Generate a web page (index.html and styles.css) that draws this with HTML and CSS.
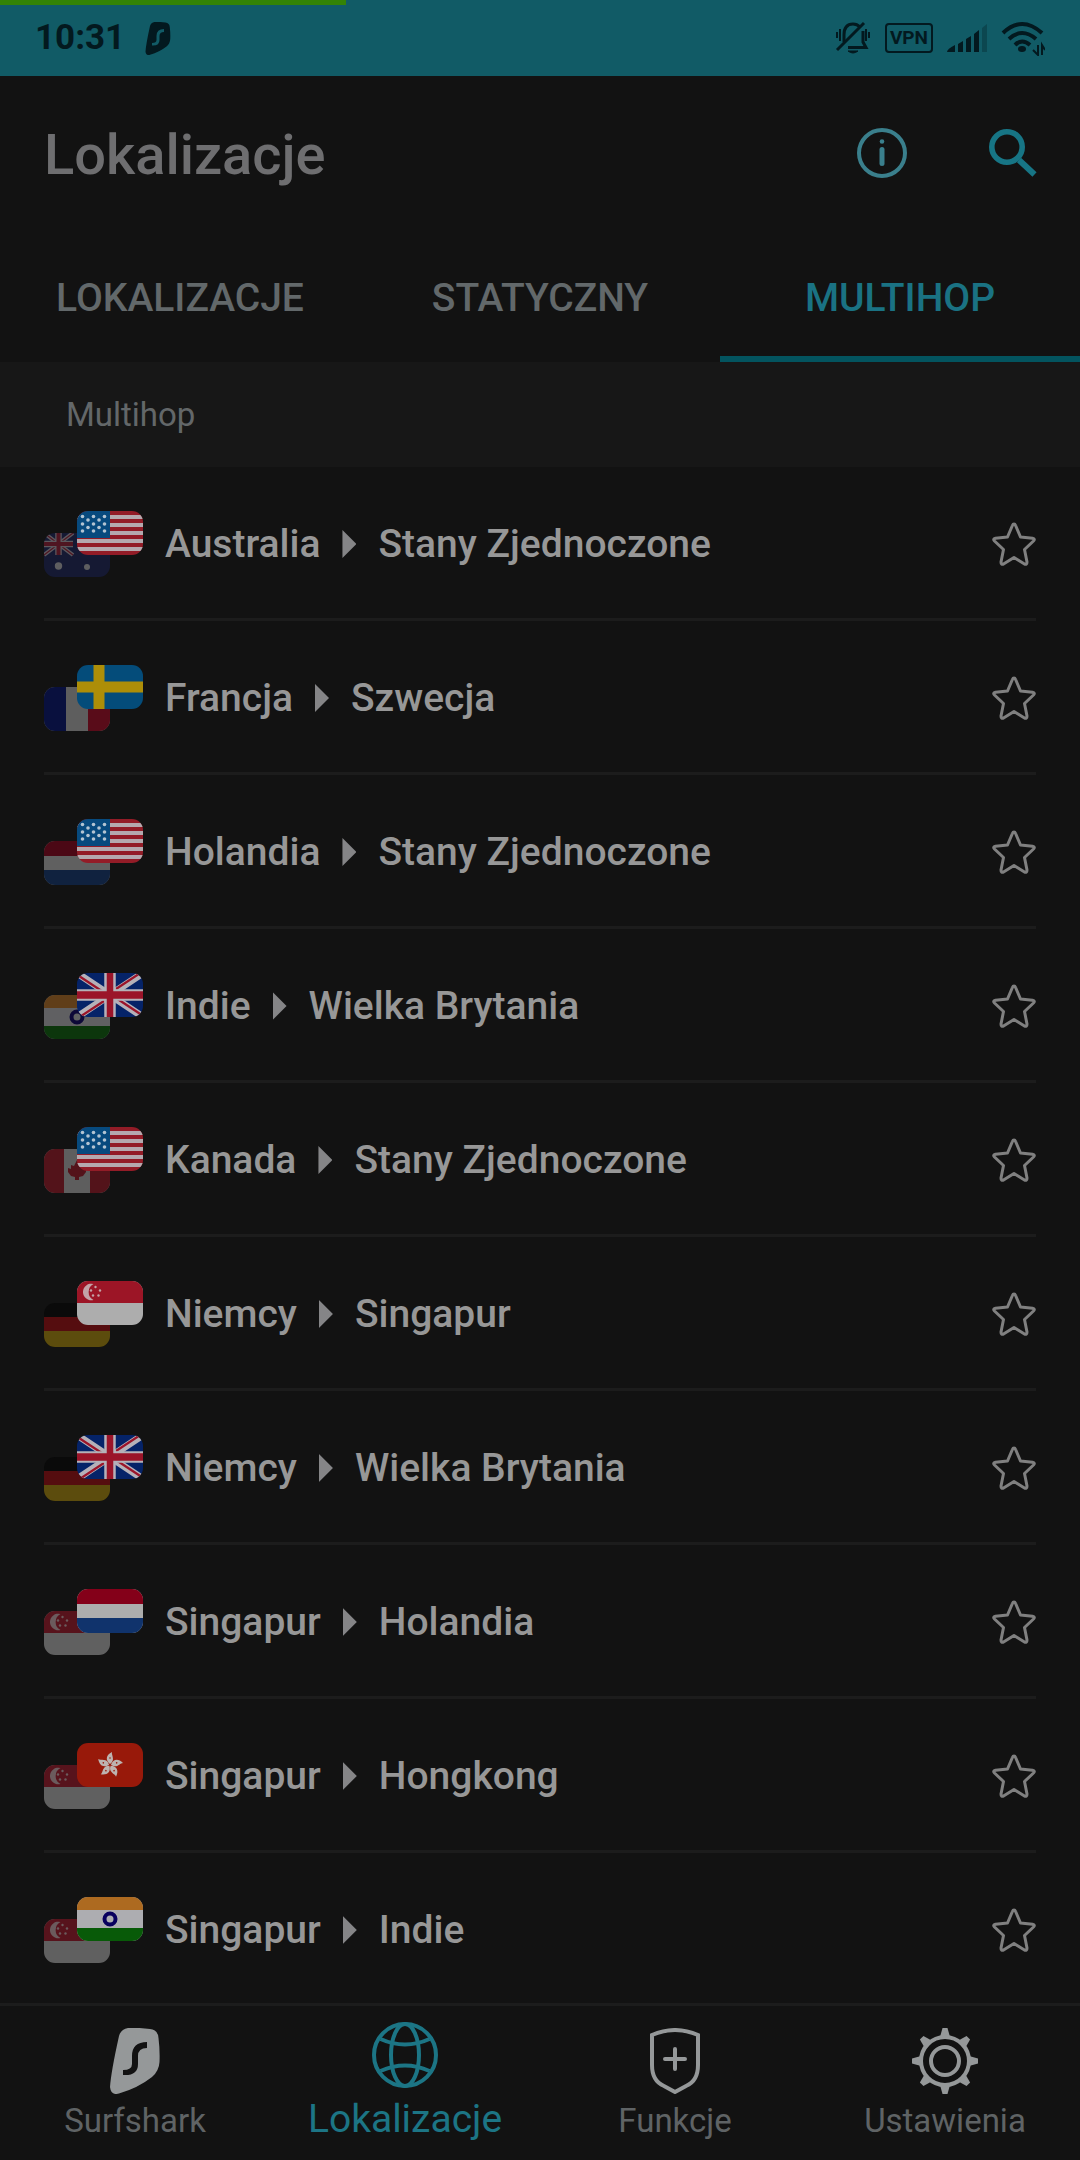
FILE: index.html
```html
<!DOCTYPE html>
<html lang="pl">
<head>
<meta charset="utf-8">
<meta name="viewport" content="width=device-width, initial-scale=1">
<title>Lokalizacje</title>
<link rel="stylesheet" href="styles.css">
</head>
<body>
<svg class="sprite" aria-hidden="true">
  <symbol id="us" viewBox="0 0 66 44">
    <rect width="66" height="44" fill="#931c27"/>
    <path d="M0 6h66M0 14h66M0 22h66M0 30h66M0 38h66" stroke="#b5a9ae" stroke-width="4"/>
    <rect width="33" height="27" fill="#074a7e"/>
    <g fill="#b3c4d2"><circle cx="5.500" cy="5.500" r="1.800"/><circle cx="16.500" cy="5.500" r="1.800"/><circle cx="27.500" cy="5.500" r="1.800"/><circle cx="11" cy="9" r="1.800"/><circle cx="22" cy="9" r="1.800"/><circle cx="5.500" cy="13" r="1.800"/><circle cx="16.500" cy="13" r="1.800"/><circle cx="27.500" cy="13" r="1.800"/><circle cx="11" cy="16.500" r="1.800"/><circle cx="22" cy="16.500" r="1.800"/><circle cx="5.500" cy="20" r="1.800"/><circle cx="16.500" cy="20" r="1.800"/><circle cx="27.500" cy="20" r="1.800"/></g>
  </symbol>
  <symbol id="gb" viewBox="0 0 66 44">
    <rect width="66" height="44" fill="#052368"/>
    <path d="M0 0L66 44M66 0L0 44" stroke="#b5b1b8" stroke-width="7"/>
    <path d="M2 3L27 19.500M39 16L64 -.5M27 28L2 44.500M64 41.500L39 25" stroke="#9b1429" stroke-width="2.200"/>
    <path d="M33 0V44M0 22H66" stroke="#b5b1b8" stroke-width="11.500"/>
    <path d="M33 0V44" stroke="#9b1429" stroke-width="6.500"/><path d="M0 22H66" stroke="#9b1429" stroke-width="7.500"/>
  </symbol>
  <symbol id="au" viewBox="0 0 66 44">
    <rect width="66" height="44" fill="#182055"/>
    <path d="M0 0L29 22M29 0L0 22" stroke="#a49da8" stroke-width="4"/>
    <path d="M0 0L29 22M29 0L0 22" stroke="#8d1830" stroke-width="1.200"/>
    <path d="M14.500 0V22M0 11H29" stroke="#a49da8" stroke-width="6.500"/>
    <path d="M14.500 0V22M0 11H29" stroke="#8d1830" stroke-width="4"/>
    <circle cx="14.500" cy="33" r="3.700" fill="#a9a9ad"/><circle cx="43" cy="34" r="3" fill="#a9a9ad"/>
  </symbol>
  <symbol id="se" viewBox="0 0 66 44">
    <rect width="66" height="44" fill="#044c7a"/><path d="M22 0V44M0 22H66" stroke="#ad8e08" stroke-width="11"/>
  </symbol>
  <symbol id="fr" viewBox="0 0 66 44">
    <rect width="66" height="44" fill="#a9a9a9"/><rect width="22" height="44" fill="#01106a"/><rect x="44" width="22" height="44" fill="#a00820"/>
  </symbol>
  <symbol id="nl" viewBox="0 0 66 44">
    <rect width="66" height="44" fill="#adadad"/><rect width="66" height="15" fill="#840019"/><rect y="29" width="66" height="15" fill="#10336c"/>
  </symbol>
  <symbol id="in" viewBox="0 0 66 44">
    <rect width="66" height="44" fill="#adadb1"/><rect width="66" height="13" fill="#ad6a20"/><rect y="31" width="66" height="13" fill="#085a08"/>
    <circle cx="33" cy="22" r="5.500" fill="none" stroke="#09005e" stroke-width="4"/>
  </symbol>
  <symbol id="ca" viewBox="0 0 66 44">
    <rect width="66" height="44" fill="#a9a9a9"/><rect width="20" height="44" fill="#941523"/><rect x="46" width="20" height="44" fill="#941523"/>
    <path d="M33 11l3 6 3-1v4l3-1 0 4-3 4-4 1v3h-4v-3l-4-1-3-4v-4l3 1v-4l3 1z" fill="#941523"/>
  </symbol>
  <symbol id="de" viewBox="0 0 66 44">
    <rect width="66" height="44" fill="#030303"/><rect y="14" width="66" height="15" fill="#970a0e"/><rect y="28" width="66" height="16" fill="#a58609"/>
  </symbol>
  <symbol id="sg" viewBox="0 0 66 44">
    <rect width="66" height="44" fill="#adadad"/><rect width="66" height="22" fill="#9c1526"/>
    <path d="M16.500 3a8.300 8.300 0 1 0 0 16a9 9 0 0 1 0-16z" fill="#c4a3a8"/>
    <g fill="#c4a3a8"><circle cx="18.500" cy="6" r="1.200"/><circle cx="14" cy="9.500" r="1.200"/><circle cx="23" cy="9.500" r="1.200"/><circle cx="16" cy="14.500" r="1.200"/><circle cx="21.500" cy="14.500" r="1.200"/></g>
  </symbol>
  <symbol id="hk" viewBox="0 0 66 44">
    <rect width="66" height="44" fill="#98190a"/>
    <g transform="translate(33 22)"><g id="petal"><path d="M0-1C-5-5-4-10 2-13C1-10 6-5 0-1z" fill="#bdb3b0"/><circle cy="-7" r=".8" fill="#98190a"/></g>
    <use href="#petal" transform="rotate(72)"/><use href="#petal" transform="rotate(144)"/><use href="#petal" transform="rotate(216)"/><use href="#petal" transform="rotate(288)"/></g>
  </symbol>
  <symbol id="star" viewBox="0 0 44 44"><path d="M22 2Q23 2 23.600 3.500L28.500 15L40.500 16.300Q43.500 17 41.500 19L32.500 27.500L35 40Q35 43 32.500 42L22 35.500L11.500 42Q9 43 9 40L11.500 27.500L2.500 19Q.5 17 3.500 16.300L15.500 15L20.400 3.500Q21 2 22 2z" fill="none" stroke="currentColor" stroke-width="3" stroke-linejoin="round"/></symbol>
  <symbol id="shark" viewBox="0 0 50 66"><path fill-rule="evenodd" d="M18 0Q30-.5 40 1Q48 2 48.500 10Q50 22 49.500 34Q49 43 42 49Q28 60 9 65.500Q1 68 0 59Q1 44 9 8Q11 1 18 0zM37 14Q22 14 22 28V36Q22 42 13 42V47Q28 48 28 36V28Q28 20 37 20z" fill="currentColor"/></symbol>
</svg>

<header class="status">
  <div class="load"></div>
  <div class="status-side">
    <time class="clock">10:31</time>
    <svg class="status-shark"><use href="#shark"/></svg>
  </div>
  <div class="status-side status-icons">
    <svg width="36" height="34" viewBox="0 0 36 34" fill="none" stroke="currentColor" stroke-width="3">
      <path d="M9 21V14Q9 3 18 3Q22 3 25 6M28 10V21L31 26.500H13"/><path d="M2 29L29 2" stroke-width="3"/><path d="M13 30H23Q18 34 13 30z" stroke-width="1" fill="currentColor"/><path d="M2 11V17M5 8V20M34 11V17M31 8V20" stroke-width="2"/>
    </svg>
    <span class="vpn">VPN</span>
    <svg width="40" height="30" viewBox="0 0 40 30" fill="currentColor"><path d="M0 29Q0 26 8 22V29zM11 21L16 18V29H11zM19 16L24 13V29H19zM27 11L32 7V29H27z"/><path d="M35 5L40 1V29H35z" opacity=".3"/></svg>
    <svg width="44" height="36" viewBox="0 0 44 36" fill="none" stroke="currentColor" stroke-width="4"><path d="M2 13Q21-5 41 13M8 19Q21 7 35 19M14 25Q21 18 29 25"/><ellipse cx="21" cy="29" rx="4" ry="3" fill="currentColor" stroke="none"/><path d="M37 25V35L32 30M41 35V25L44 30" stroke-width="2"/></svg>
  </div>
</header>

<div class="topbar">
  <h1>Lokalizacje</h1>
  <div class="actions">
    <button type="button" class="icon-btn info" aria-label="Informacje"><svg width="50" height="50" viewBox="0 0 50 50" fill="none" stroke="currentColor"><circle cx="25" cy="25" r="23" stroke-width="4"/><circle cx="25" cy="13.500" r="2.300" fill="currentColor" stroke="none"/><path d="M25 21.500V35.500" stroke-width="5" stroke-linecap="round"/></svg></button>
    <button type="button" class="icon-btn search" aria-label="Szukaj"><svg width="48" height="50" viewBox="0 0 48 50" fill="none" stroke="currentColor"><circle cx="18" cy="19" r="15.200" stroke-width="5.600"/><path d="M30 32L45.500 46.500" stroke-width="6"/></svg></button>
  </div>
</div>

<div class="tabs" role="tablist">
  <button type="button" role="tab">LOKALIZACJE</button>
  <button type="button" role="tab">STATYCZNY</button>
  <button type="button" role="tab" class="active" aria-selected="true">MULTIHOP</button>
</div>

<main>
  <h2>Multihop</h2>
  <ul class="routes">
    <li><span class="flags"><svg class="from"><use href="#au"/></svg><svg class="to"><use href="#us"/></svg></span><span class="name">Australia</span><i class="arrow"></i><span class="name">Stany Zjednoczone</span><button type="button" class="fav" aria-label="Dodaj do ulubionych"><svg><use href="#star"/></svg></button></li>
    <li><span class="flags"><svg class="from"><use href="#fr"/></svg><svg class="to"><use href="#se"/></svg></span><span class="name">Francja</span><i class="arrow"></i><span class="name">Szwecja</span><button type="button" class="fav" aria-label="Dodaj do ulubionych"><svg><use href="#star"/></svg></button></li>
    <li><span class="flags"><svg class="from"><use href="#nl"/></svg><svg class="to"><use href="#us"/></svg></span><span class="name">Holandia</span><i class="arrow"></i><span class="name">Stany Zjednoczone</span><button type="button" class="fav" aria-label="Dodaj do ulubionych"><svg><use href="#star"/></svg></button></li>
    <li><span class="flags"><svg class="from"><use href="#in"/></svg><svg class="to"><use href="#gb"/></svg></span><span class="name">Indie</span><i class="arrow"></i><span class="name">Wielka Brytania</span><button type="button" class="fav" aria-label="Dodaj do ulubionych"><svg><use href="#star"/></svg></button></li>
    <li><span class="flags"><svg class="from"><use href="#ca"/></svg><svg class="to"><use href="#us"/></svg></span><span class="name">Kanada</span><i class="arrow"></i><span class="name">Stany Zjednoczone</span><button type="button" class="fav" aria-label="Dodaj do ulubionych"><svg><use href="#star"/></svg></button></li>
    <li><span class="flags"><svg class="from"><use href="#de"/></svg><svg class="to"><use href="#sg"/></svg></span><span class="name">Niemcy</span><i class="arrow"></i><span class="name">Singapur</span><button type="button" class="fav" aria-label="Dodaj do ulubionych"><svg><use href="#star"/></svg></button></li>
    <li><span class="flags"><svg class="from"><use href="#de"/></svg><svg class="to"><use href="#gb"/></svg></span><span class="name">Niemcy</span><i class="arrow"></i><span class="name">Wielka Brytania</span><button type="button" class="fav" aria-label="Dodaj do ulubionych"><svg><use href="#star"/></svg></button></li>
    <li><span class="flags"><svg class="from"><use href="#sg"/></svg><svg class="to"><use href="#nl"/></svg></span><span class="name">Singapur</span><i class="arrow"></i><span class="name">Holandia</span><button type="button" class="fav" aria-label="Dodaj do ulubionych"><svg><use href="#star"/></svg></button></li>
    <li><span class="flags"><svg class="from"><use href="#sg"/></svg><svg class="to"><use href="#hk"/></svg></span><span class="name">Singapur</span><i class="arrow"></i><span class="name">Hongkong</span><button type="button" class="fav" aria-label="Dodaj do ulubionych"><svg><use href="#star"/></svg></button></li>
    <li><span class="flags"><svg class="from"><use href="#sg"/></svg><svg class="to"><use href="#in"/></svg></span><span class="name">Singapur</span><i class="arrow"></i><span class="name">Indie</span><button type="button" class="fav" aria-label="Dodaj do ulubionych"><svg><use href="#star"/></svg></button></li>
  </ul>
</main>

<nav class="bottom">
  <a href="#"><svg viewBox="0 0 66 66"><use href="#shark" x="8" width="50" height="66"/></svg>Surfshark</a>
  <a href="#" class="active" aria-current="page"><svg viewBox="0 0 66 66" fill="none" stroke="currentColor" stroke-width="4"><circle cx="33" cy="33" r="31"/><ellipse cx="33" cy="33" rx="14" ry="31"/><path d="M8.500 17Q33 28 57.500 17M8.500 49Q33 38 57.500 49"/></svg>Lokalizacje</a>
  <a href="#"><svg viewBox="0 0 66 66" fill="none" stroke="currentColor" stroke-width="4"><path d="M10 7Q33-3 56 7V37Q56 53 44 58L33 64L22 58Q10 53 10 37z"/><path d="M33 21V41M23 31H43" stroke-linecap="round"/></svg>Funkcje</a>
  <a href="#"><svg viewBox="0 0 66 66" fill="none" stroke="currentColor" stroke-width="4"><circle cx="33" cy="33" r="24"/><circle cx="33" cy="33" r="14"/><g fill="currentColor" stroke="none"><g id="teeth"><path id="tooth" d="M28 9L30.500 0H35.500L38 9z"/><use href="#tooth" transform="rotate(90 33 33)"/><use href="#tooth" transform="rotate(180 33 33)"/><use href="#tooth" transform="rotate(270 33 33)"/></g><use href="#teeth" transform="rotate(45 33 33)"/></g></svg>Ustawienia</a>
</nav>
</body>
</html>
```
FILE: styles.css
```css
* { box-sizing: border-box; }

body {
  margin: 0;
  min-height: 100vh;
  display: flex;
  flex-direction: column;
  background: #121212;
  color: #979797;
  font-family: Roboto, "Liberation Sans", sans-serif;
}

button {
  padding: 0;
  border: 0;
  background: none;
  color: inherit;
  font: inherit;
}

svg { display: block; }
.sprite { position: absolute; width: 0; height: 0; }

/* Status bar */
.status {
  position: relative;
  display: flex;
  align-items: center;
  justify-content: space-between;
  height: 76px;
  padding: 0 35px;
  background: #115b66;
  color: #03191f;
}
.load {
  position: absolute;
  top: 0;
  left: 0;
  width: 32%;
  height: 5px;
  background: #338305;
}
.status-side { display: flex; align-items: center; gap: 20px; }
.status-icons { gap: 14px; }
.clock { font-size: 35px; font-weight: 700; line-height: 40px; }
.status-shark { width: 26px; height: 33px; }
.vpn {
  width: 48px;
  height: 30px;
  border: 2px solid;
  border-radius: 4px;
  font-size: 19px;
  font-weight: 700;
  line-height: 26px;
  text-align: center;
}

/* Title bar */
.topbar {
  display: flex;
  align-items: center;
  justify-content: space-between;
  height: 154px;
  padding: 0 43px 0 44px;
}
h1 {
  margin: 0;
  padding-top: 4px;
  color: #6e6e70;
  font-size: 56px;
  font-weight: 500;
  line-height: 64px;
}
.actions { display: flex; align-items: center; gap: 82px; }
.info { color: #3a7f8c; }
.search { color: #177585; }

/* Tabs */
.tabs { display: grid; grid-template-columns: repeat(3, 1fr); }
.tabs button {
  height: 132px;
  padding-top: 4px;
  color: #62686a;
  font-size: 39px;
  font-weight: 500;
}
.tabs .active { color: #1a7283; box-shadow: inset 0 -6px #03545f; }

/* Route list */
h2 {
  margin: 0;
  padding: 0 66px;
  background: #171717;
  color: #636769;
  font-size: 33px;
  font-weight: 400;
  line-height: 105px;
}
.routes { margin: 0; padding: 0 44px; list-style: none; }
.routes li {
  display: flex;
  align-items: center;
  padding: 44px 0 41px;
  border-bottom: 3px solid #1c1c1c;
}
.routes li:last-child { padding-bottom: 40px; border-bottom: 0; }
.flags {
  display: grid;
  grid-template: repeat(3, 22px) / repeat(3, 33px);
  margin-right: 22px;
}
.flags svg { width: 66px; height: 44px; border-radius: 11px; }
.from { grid-area: 2 / 1 / 4 / 3; opacity: .5; }
.to { grid-area: 1 / 2 / 3 / 4; z-index: 1; }
.name { font-size: 39px; font-weight: 500; line-height: 44px; }
.arrow {
  width: 14px;
  height: 28px;
  margin: 0 22px;
  background: #858587;
  clip-path: polygon(0 0, 100% 50%, 0 100%);
}
.fav { margin-left: auto; color: #808080; }
.fav svg { width: 44px; height: 44px; }

/* Bottom navigation */
.bottom {
  display: grid;
  grid-template-columns: repeat(4, 1fr);
  margin-top: auto;
  height: 157px;
  border-top: 3px solid #1c1c1c;
}
.bottom a {
  display: flex;
  flex-direction: column;
  align-items: center;
  justify-content: flex-end;
  gap: 7px;
  padding-bottom: 20px;
  color: #5f6365;
  font-size: 33px;
  line-height: 39px;
  text-decoration: none;
}
.bottom svg { width: 66px; height: 66px; color: #959899; }
.bottom .active { gap: 10px; padding-bottom: 19px; color: #1c7585; font-size: 39px; line-height: 43px; }
.bottom .active svg { color: inherit; }
```
